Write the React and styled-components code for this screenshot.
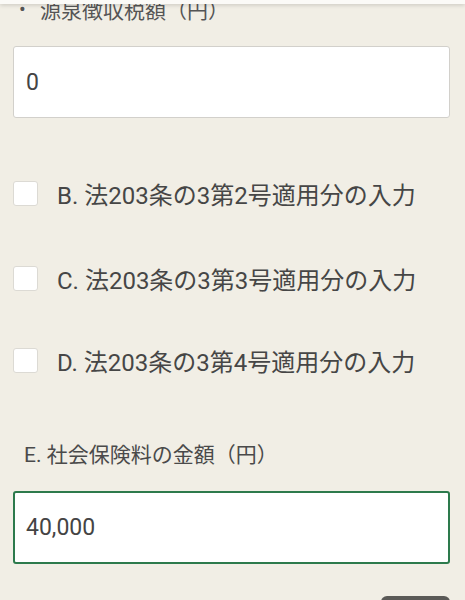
import React, { useState } from 'react';
import styled, { createGlobalStyle } from 'styled-components';

const GlobalStyle = createGlobalStyle`
  html, body {
    margin: 0;
    padding: 0;
    background: #f1eee5;
    overflow: hidden;
  }
  body {
    font-family: Roboto, "Noto Sans CJK JP", sans-serif;
    color: #484848;
  }
`;

const TopBar = styled.div`
  position: fixed;
  top: 0;
  left: 0;
  right: 0;
  height: 4px;
  background: #fbfaf7;
  box-shadow: 0 1px 4px rgba(0, 0, 0, 0.18);
  z-index: 2;
`;

const Page = styled.div`
  display: flex;
  flex-direction: column;
  height: 600px;
  overflow: hidden;
  box-sizing: border-box;
  padding: 0 15px 0 13px;
  & > * {
    flex: none;
  }
`;

const Heading = styled.div`
  display: flex;
  align-items: center;
  margin-top: -3px;
  height: 24px;
  font-size: 21px;
  color: #555;
`;

const Bullet = styled.span`
  width: 27px;
  padding-left: 6px;
  box-sizing: border-box;
  font-size: 20px;
`;

const Field = styled.input`
  box-sizing: border-box;
  width: 100%;
  height: ${(p) => p.$height}px;
  margin-top: ${(p) => p.$top}px;
  padding: 0 0 0 ${(p) => (p.$focused ? 11 : 12)}px;
  border: ${(p) => (p.$focused ? '2px solid #2d7a4c' : '1px solid #d2d0cb')};
  border-radius: 3px;
  background: #fff;
  font-family: Roboto, "Noto Sans CJK JP", sans-serif;
  font-size: 23px;
  color: #444;
  outline: none;
`;

const CheckRow = styled.label`
  display: flex;
  align-items: center;
  gap: 19px;
  height: 26px;
  margin-top: ${(p) => p.$top}px;
  font-size: 24px;
  color: #464646;
  cursor: pointer;
`;

const Box = styled.span`
  flex: none;
  width: 25px;
  height: 25px;
  box-sizing: border-box;
  background: #fff;
  border: 1px solid #dcdad4;
  border-radius: 3px;
`;

const Label = styled.div`
  margin-top: 69px;
  padding-left: 11px;
  height: 26px;
  line-height: 26px;
  font-size: 21px;
  color: #4a4a4a;
`;

const Footer = styled.div`
  display: flex;
  justify-content: flex-end;
  margin-top: 32px;
`;

const NextButton = styled.button`
  width: 69px;
  height: 40px;
  border: none;
  border-radius: 6px;
  background: #5b5a57;
`;

const rows = [
  { key: 'B', text: 'B. 法203条の3第2号適用分の入力', top: 62 },
  { key: 'C', text: 'C. 法203条の3第3号適用分の入力', top: 59 },
  { key: 'D', text: 'D. 法203条の3第4号適用分の入力', top: 56 },
];

const App = () => {
  const [withheld, setWithheld] = useState('0');
  const [insurance, setInsurance] = useState('40,000');

  return (
    <>
      <GlobalStyle />
      <TopBar />
      <Page>
        <Heading>
          <Bullet>•</Bullet>
          源泉徴収税額（円）
        </Heading>
        <Field
          $top={25}
          $height={72}
          value={withheld}
          onChange={(e) => setWithheld(e.target.value)}
        />
        {rows.map((row) => (
          <CheckRow key={row.key} $top={row.top}>
            <Box />
            {row.text}
          </CheckRow>
        ))}
        <Label>E. 社会保険料の金額（円）</Label>
        <Field
          $top={23}
          $height={73}
          $focused
          value={insurance}
          onChange={(e) => setInsurance(e.target.value)}
        />
        <Footer>
          <NextButton />
        </Footer>
      </Page>
    </>
  );
};

export default App;
